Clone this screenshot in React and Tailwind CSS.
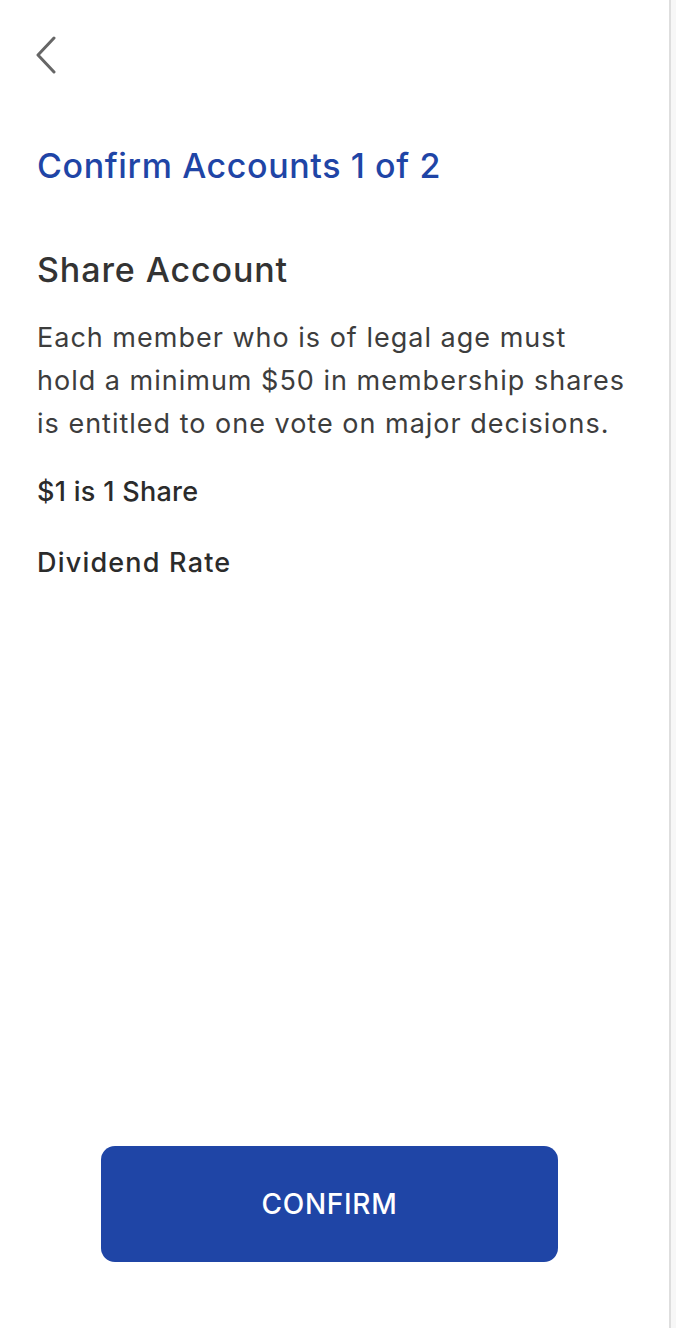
import React from 'react';

const App = () => {
    return (
        <div className="min-h-screen w-full bg-[#f7f7f7]" style={{ fontFamily: 'Inter, "Noto Sans", sans-serif' }}>
            <div className="w-[671px] min-h-[1328px] bg-white border-r-2 border-[#dedede] flex flex-col">
                {/* back chevron */}
                <div className="pl-[34px] pt-[36px]">
                    <svg width="24" height="38" viewBox="0 0 24 38" fill="none">
                        <path d="M20 2 L4 19 L20 36" stroke="#666" strokeWidth="3" strokeLinecap="round" strokeLinejoin="round" />
                    </svg>
                </div>

                <div className="px-[37px]">
                    <h1 className="mt-[72px] text-[34px] leading-[40px] tracking-[0.6px] text-[#1f45a6] font-medium">Confirm Accounts 1 of 2</h1>

                    <h2 className="mt-[64px] text-[34px] leading-[40px] tracking-[0.9px] text-[#333] font-medium">Share Account</h2>

                    <p className="mt-[26px] w-[595px] text-[27px] leading-[43px] tracking-[1px] text-[#3d3d3d]">
                        Each member who is of legal age must hold a minimum $50 in membership shares is entitled to one vote on major decisions.
                    </p>

                    <p className="mt-[29px] text-[27px] leading-[36px] tracking-[0.3px] text-[#2b2b2b] font-medium">$1 is 1 Share</p>
                    <p className="mt-[35px] text-[27px] leading-[36px] tracking-[1.2px] text-[#2b2b2b] font-medium">Dividend Rate</p>
                </div>

                <div className="flex-1" />

                <div className="pl-[101px] pb-[66px]">
                    <button className="w-[457px] h-[116px] rounded-[14px] bg-[#1f45a6] text-white text-[28px] font-medium tracking-wide">
                        CONFIRM
                    </button>
                </div>
            </div>
        </div>
    );
};

export default App;
